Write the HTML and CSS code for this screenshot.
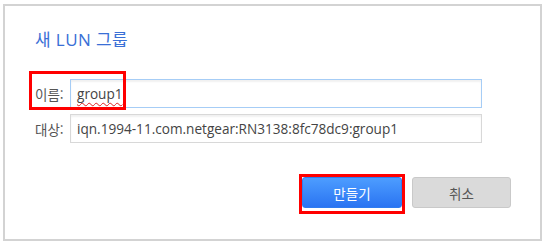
FILE: index.html
```html
<!DOCTYPE html>
<html lang="ko">
<head>
<meta charset="utf-8">
<link rel="stylesheet" href="styles.css">
</head>
<body>
<div class="dialog">
  <h1 class="title">새 LUN 그룹</h1>
  <div class="form">
    <div class="row">
      <span class="label">이름:</span>
      <div class="field focused"><span class="misspelled">group1</span><span class="caret"></span></div>
      <div class="mark mark-name"></div>
    </div>
    <div class="row">
      <span class="label">대상:</span>
      <div class="field">iqn.1994-11.com.netgear:RN3138:8fc78dc9:group1</div>
    </div>
  </div>
  <div class="actions">
    <div class="btn-wrap">
      <button class="btn primary">만들기</button>
      <div class="mark mark-btn"></div>
    </div>
    <button class="btn secondary">취소</button>
  </div>
</div>
</body>
</html>
```
FILE: styles.css
```css
html, body {
  margin: 0;
  padding: 0;
  background: #ffffff;
}
body {
  font-family: "Open Sans", "Noto Sans CJK KR", sans-serif;
  color: #444;
}
.dialog {
  box-sizing: border-box;
  margin: 4px 0 0 3px;
  width: 539px;
  height: 237px;
  border: 2px solid #d3d3d3;
  padding: 0 0 0 30px;
}
.title {
  margin: 0;
  padding-top: 22px;
  height: 24px;
  font-size: 17px;
  font-weight: normal;
  color: #3a6fd6;
  line-height: 24px;
  letter-spacing: 0.4px;
}
.form {
  margin-top: 27px;
  display: flex;
  flex-direction: column;
  gap: 6px;
}
.row {
  position: relative;
  display: flex;
  align-items: center;
  height: 29px;
}
.label {
  width: 35px;
  font-size: 13.5px;
  color: #555;
  font-family: "Noto Sans CJK KR", sans-serif;
}
.field {
  box-sizing: border-box;
  width: 412px;
  height: 29px;
  border: 1px solid #d8d8d8;
  box-shadow: inset 0 2px 2px rgba(0,0,0,0.06);
  padding: 0 6px;
  font-size: 13.6px;
  line-height: 27px;
  color: #444;
  display: flex;
  align-items: center;
  white-space: nowrap;
}
.field.focused {
  border-color: #a6cdf6;
}
.misspelled {
  text-decoration: underline wavy #e02020;
  text-decoration-thickness: 1px;
  text-underline-offset: 3px;
}
.caret {
  display: inline-block;
  width: 1px;
  height: 17px;
  background: #222;
  margin-left: 1px;
}
.mark {
  position: absolute;
  border: 3px solid #ff0000;
  box-sizing: border-box;
}
.mark-name {
  left: -6px;
  top: -8px;
  width: 97px;
  height: 39px;
}
.actions {
  margin-top: 34px;
  display: flex;
  gap: 10px;
  padding-left: 267px;
}
.btn-wrap {
  position: relative;
}
.btn {
  box-sizing: border-box;
  width: 100px;
  height: 31px;
  border-radius: 3px;
  font-family: "Noto Sans CJK KR", sans-serif;
  font-size: 13.5px;
  padding: 0;
  display: block;
}
.primary {
  color: #fff;
  border: 1px solid #2f7cf0;
  background: linear-gradient(#4d9dff, #2a74f2);
}
.secondary {
  width: 99px;
  color: #555;
  border: 1px solid #c9c9c9;
  background: #dadada;
}
.mark-btn {
  left: -3px;
  top: -3px;
  width: 106px;
  height: 40px;
}
```
